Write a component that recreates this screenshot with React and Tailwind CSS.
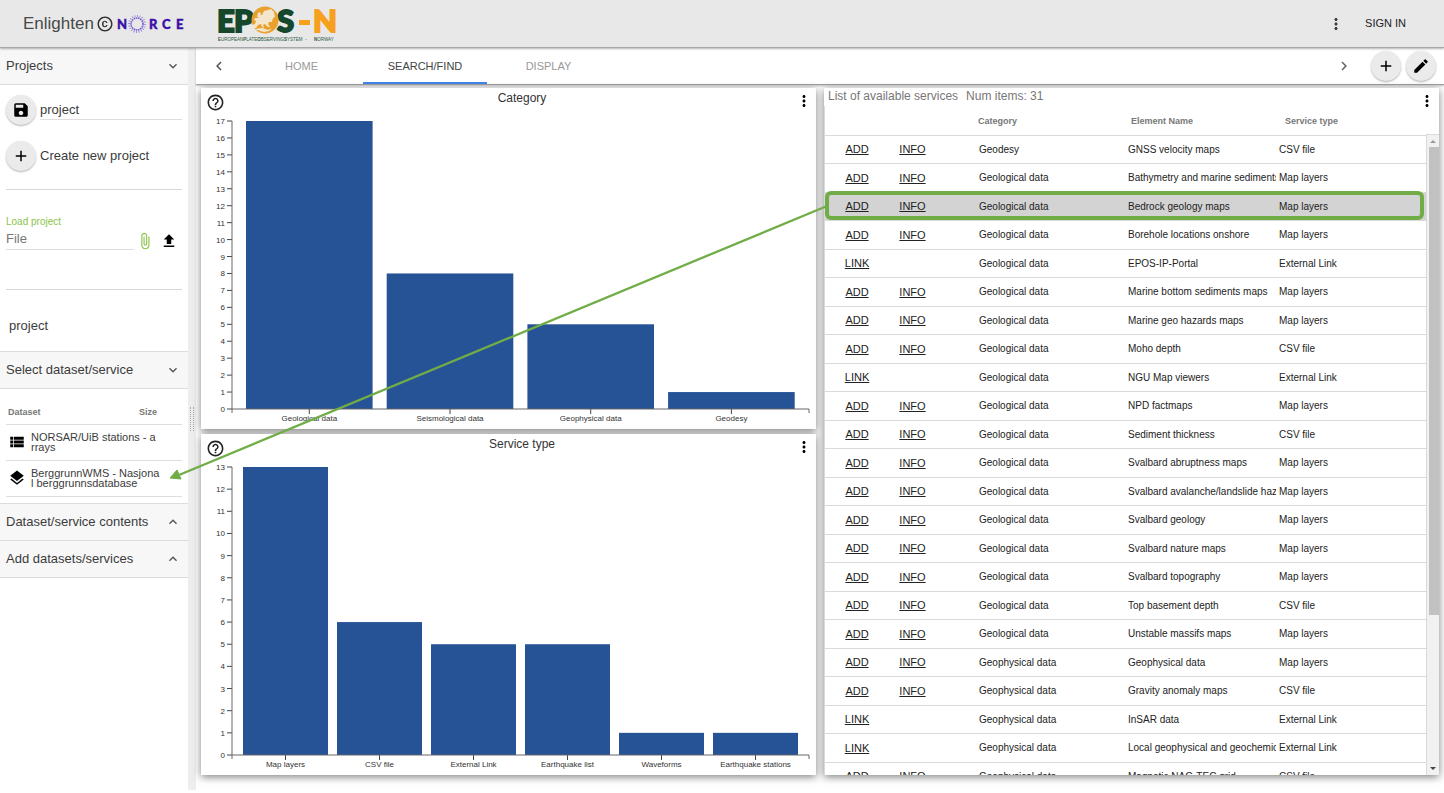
import {
    MdAdd,
    MdAttachFile,
    MdChevronLeft,
    MdChevronRight,
    MdCopyright,
    MdEdit,
    MdExpandLess,
    MdExpandMore,
    MdFileUpload,
    MdHelpOutline,
    MdLayers,
    MdMoreVert,
    MdSave,
    MdViewList,
} from "react-icons/md"

const TABS = ["HOME", "SEARCH/FIND", "DISPLAY"]

const CATEGORIES = [
    { label: "Geological data", value: 17 },
    { label: "Seismological data", value: 8 },
    { label: "Geophysical data", value: 5 },
    { label: "Geodesy", value: 1 },
]

const SERVICE_TYPES = [
    { label: "Map layers", value: 13 },
    { label: "CSV file", value: 6 },
    { label: "External Link", value: 5 },
    { label: "Earthquake list", value: 5 },
    { label: "Waveforms", value: 1 },
    { label: "Earthquake stations", value: 1 },
]

const DATASETS = [
    { name: "NORSAR/UiB stations - a\nrrays", Icon: MdViewList },
    { name: "BerggrunnWMS - Nasjona\nl berggrunnsdatabase", Icon: MdLayers },
]

const SERVICES = [
    ["Geodesy", "GNSS velocity maps", "CSV file"],
    ["Geological data", "Bathymetry and marine sediments", "Map layers"],
    ["Geological data", "Bedrock geology maps", "Map layers"],
    ["Geological data", "Borehole locations onshore", "Map layers"],
    ["Geological data", "EPOS-IP-Portal", "External Link"],
    ["Geological data", "Marine bottom sediments maps", "Map layers"],
    ["Geological data", "Marine geo hazards maps", "Map layers"],
    ["Geological data", "Moho depth", "CSV file"],
    ["Geological data", "NGU Map viewers", "External Link"],
    ["Geological data", "NPD factmaps", "Map layers"],
    ["Geological data", "Sediment thickness", "CSV file"],
    ["Geological data", "Svalbard abruptness maps", "Map layers"],
    ["Geological data", "Svalbard avalanche/landslide haz", "Map layers"],
    ["Geological data", "Svalbard geology", "Map layers"],
    ["Geological data", "Svalbard nature maps", "Map layers"],
    ["Geological data", "Svalbard topography", "Map layers"],
    ["Geological data", "Top basement depth", "CSV file"],
    ["Geological data", "Unstable massifs maps", "Map layers"],
    ["Geophysical data", "Geophysical data", "Map layers"],
    ["Geophysical data", "Gravity anomaly maps", "CSV file"],
    ["Geophysical data", "InSAR data", "External Link"],
    ["Geophysical data", "Local geophysical and geochemic", "External Link"],
    ["Geophysical data", "Magnetic NAG-TEC grid", "CSV file"],
]

const SELECTED = "Bedrock geology maps"

const NorceLogo = () => (
    <svg width="70" height="22" viewBox="0 0 70 22" role="img" aria-label="NORCE" className="ml-0.5">
        <g fill="#3a10a8" stroke="#3a10a8" strokeWidth="0.4" fontFamily="Lato, sans-serif" fontWeight="900" fontSize="13">
            <text x="1" y="16">N</text>
            <text x="33" y="16">R</text>
            <text x="46" y="16">C</text>
            <text x="60" y="16">E</text>
        </g>
        <g fill="none">
            <circle cx="21" cy="11" r="6" strokeWidth="1.6" strokeDasharray="1.6 0.6" stroke="#7a5fd0" />
            <circle cx="21" cy="11" r="8" strokeWidth="2" strokeDasharray="0.9 1.6" stroke="#9a86da" />
        </g>
    </svg>
)

const EposLogo = () => (
    <svg width="124" height="44" viewBox="0 -3 124 44" role="img" aria-label="EPOS-N">
        <g
            fontFamily="Lato, sans-serif"
            fontWeight="900"
            fontSize="31"
            fill="#14472b"
            stroke="#14472b"
            strokeWidth="1.8"
        >
            <text x="0" y="27">E</text>
            <text x="17" y="27">P</text>
            <text x="60" y="27">S</text>
            <text x="96" y="27" fill="#f6a01d" stroke="#f6a01d">N</text>
        </g>
        <rect x="82" y="15" width="11" height="5" fill="#f6a01d" />
        <circle cx="48" cy="15" r="13.5" fill="#e9a02c" />
        {/* europe */}
        <path
            d="M51 5l3-1 3 3 1 5-2 1-1 4-3 0-1 2 2 3-2 0-3-3-2 1 1 3-2-1-1-3-3 1-2 3-3 0-1-3 3-1 1-3-2-1 1-2 3 0 2-3 2 0 2-4z"
            fill="#f3e6cc"
        />
        <path d="M41 8l2-1 1 2-2 3-2 0zM37 24l8-1 6 2 4-2-3 3-5 1z" fill="#f3e6cc" />
        <g fontFamily="'Liberation Sans', sans-serif" fontSize="4.5" fill="#2c5a40">
            <text x="1" y="36">
                <tspan fontWeight="700">E</tspan>UROPEAN<tspan fontWeight="700">P</tspan>LATE<tspan fontWeight="700">O</tspan>BSERVING<tspan fontWeight="700">S</tspan>YSTEM
            </text>
            <text x="88" y="36">-</text>
            <text x="97" y="36"><tspan fontWeight="700">N</tspan>ORWAY</text>
        </g>
    </svg>
)

const RoundButton = ({ label, children }) => (
    <button
        type="button"
        aria-label={label}
        className="flex size-[30px] shrink-0 items-center justify-center rounded-full bg-[#ebebeb] text-black shadow-[0_1px_2px_rgba(0,0,0,0.3)]"
    >
        {children}
    </button>
)

const Header = () => (
    <header className="relative z-10 flex h-12 shrink-0 items-center border-b border-[#a8a8a8] bg-[#e8e8e8] pr-[38px] shadow-[0_1px_2px_rgba(0,0,0,0.3)]">
        <div className="flex w-[217px] items-center pl-[23px]">
            <span className="text-[17px] text-[#484848]">Enlighten</span>
            <MdCopyright className="ml-0.5 size-[18px] text-[#333]" />
            <NorceLogo />
        </div>
        <EposLogo />
        <div className="ml-auto flex items-center gap-5">
            <button type="button" aria-label="More">
                <MdMoreVert className="size-[18px] text-[#333]" />
            </button>
            <a href="#signin" className="text-[11px] text-[#222]">SIGN IN</a>
        </div>
    </header>
)

const SectionHeader = ({ title, open }) => (
    <button
        type="button"
        aria-expanded={open}
        className="flex h-[37px] w-full shrink-0 items-center justify-between border-b border-[#dcdcdc] bg-[#f7f7f7] pr-[7px] pl-1.5 text-left text-[13px]"
    >
        {title}
        {open ? <MdExpandMore className="size-4 text-[#555]" /> : <MdExpandLess className="size-4 text-[#555]" />}
    </button>
)

const Sidebar = () => (
    <aside className="flex w-[188px] shrink-0 flex-col overflow-hidden text-[#3c3c3c]">
        <SectionHeader title="Projects" open />
        <div className="flex flex-col border-b border-[#dcdcdc] px-1.5 pt-2.5">
            <div className="flex items-center gap-1">
                <RoundButton label="Save project">
                    <MdSave className="size-[18px]" />
                </RoundButton>
                <input
                    aria-label="Project name"
                    defaultValue="project"
                    className="h-5 w-full min-w-0 border-b border-[#dedede] text-[13px] outline-none"
                />
            </div>
            <div className="mt-4 flex items-center gap-1">
                <RoundButton label="Create new project">
                    <MdAdd className="size-[18px]" />
                </RoundButton>
                <span className="text-[13px]">Create new project</span>
            </div>
            <hr className="mt-[18px] border-[#d8d8d8]" />

            <label htmlFor="project-file" className="mt-[26px] text-[10px] leading-3 text-[#8bc34a]">
                Load project
            </label>
            <div className="flex h-[22px] items-end">
                <input
                    id="project-file"
                    placeholder="File"
                    className="h-[22px] w-32 border-b border-[#dedede] text-[13px] outline-none placeholder:text-[#777]"
                />
                <button type="button" aria-label="Attach file" className="ml-0.5">
                    <MdAttachFile className="size-[18px] text-[#8bc34a]" />
                </button>
                <button type="button" aria-label="Upload" className="ml-1.5">
                    <MdFileUpload className="size-[18px] text-black" />
                </button>
            </div>
            <hr className="mt-[39px] border-[#d8d8d8]" />
            <p className="mt-[26px] mb-[15px] pl-[3px] text-[13px] leading-5">project</p>
        </div>

        <SectionHeader title="Select dataset/service" open />
        <div className="border-b border-[#dcdcdc] px-1.5 pt-[13px] pb-1.5">
            <table className="w-full table-fixed border-collapse text-left">
                <thead>
                    <tr className="h-[22px] border-b border-[#dedede] text-[9px] text-[#777]">
                        <th className="w-[133px] pl-0.5">Dataset</th>
                        <th>Size</th>
                    </tr>
                </thead>
                <tbody>
                    {DATASETS.map(({ name, Icon }) => (
                        <tr key={name} className="h-9 border-b border-[#dedede]">
                            <td colSpan={2}>
                                <div className="flex items-center gap-[5px] pl-0.5">
                                    <Icon className="size-[18px] shrink-0 text-black" />
                                    <span className="text-[11px] leading-[10px] whitespace-pre-line">{name}</span>
                                </div>
                            </td>
                        </tr>
                    ))}
                </tbody>
            </table>
        </div>
        <SectionHeader title="Dataset/service contents" />
        <SectionHeader title="Add datasets/services" />
    </aside>
)

const Splitter = () => (
    <div className="flex w-2 shrink-0 items-center justify-center bg-[#eeeeee]">
        <div className="h-6 w-1 border-x border-dotted border-[#aaa]" />
    </div>
)

const TabBar = () => (
    <nav className="flex h-[37px] shrink-0 items-center border-b border-[#a0a0a0] bg-white pr-2 pl-3.5 shadow-[0_1px_2px_rgba(0,0,0,0.25)]">
        <button type="button" aria-label="Previous tabs" className="w-[30px]">
            <MdChevronLeft className="size-[18px] text-[#555]" />
        </button>
        {TABS.map((tab) => (
            <button
                type="button"
                key={tab}
                className={
                    tab === "SEARCH/FIND"
                        ? "h-full w-[124px] border-b-2 border-[#4285e8] pt-0.5 text-[11px] text-[#444]"
                        : "h-full w-[123px] text-[11px] text-[#999]"
                }
            >
                {tab}
            </button>
        ))}
        <button type="button" aria-label="Next tabs" className="mr-[18px] ml-auto">
            <MdChevronRight className="size-[18px] text-[#666]" />
        </button>
        <div className="flex gap-[5px]">
            <RoundButton label="Add">
                <MdAdd className="size-[18px]" />
            </RoundButton>
            <RoundButton label="Edit">
                <MdEdit className="size-[18px]" />
            </RoundButton>
        </div>
    </nav>
)

const BarChart = ({ data, step, offset, barWidth }) => {
    const left = 31
    const top = 9
    const bottom = 297
    const max = data[0].value
    const y = (v) => bottom - (v * (bottom - top)) / max
    const ticks = Array.from({ length: max + 1 }, (_, i) => i)

    return (
        <svg viewBox="0 0 615 317" className="min-h-0 w-full flex-1" fontSize="8" fill="#333">
            {data.map((d, i) => {
                const x = left + offset + i * step
                const mid = x + barWidth / 2
                return (
                    <g key={d.label}>
                        <rect x={x} y={y(d.value)} width={barWidth} height={bottom - y(d.value)} fill="#265296" />
                        <path d={`M${mid} ${bottom}v5`} stroke="#444" />
                        <text x={mid} y={bottom + 12} textAnchor="middle">{d.label}</text>
                    </g>
                )
            })}
            {ticks.map((t) => (
                <g key={t}>
                    <path d={`M${left - 5} ${y(t)}h5`} stroke="#444" />
                    <text x={left - 7} y={y(t) + 3} textAnchor="end">{t}</text>
                </g>
            ))}
            <path d={`M${left} ${top}V${bottom + 4}M${left} ${bottom}H608v4`} fill="none" stroke="#666" />
        </svg>
    )
}

const ChartPanel = ({ title, ...chart }) => (
    <section className="flex min-h-0 flex-1 flex-col bg-white shadow-[0_2px_8px_rgba(0,0,0,0.5)]">
        <div className="flex h-6 shrink-0 items-start justify-between pr-[3px] pl-[5px]">
            <button type="button" aria-label="Help" className="mt-[5px]">
                <MdHelpOutline className="size-[19px] text-[#222]" />
            </button>
            <h2 className="pl-6 text-xs leading-5 text-[#333]">{title}</h2>
            <button type="button" aria-label="Chart menu" className="mt-1">
                <MdMoreVert className="size-[18px] text-black" />
            </button>
        </div>
        <BarChart {...chart} />
    </section>
)

const ServiceRow = ({ category, name, type }) => {
    const selected = name === SELECTED
    const external = type === "External Link"

    return (
        <tr
            className={
                selected
                    ? "relative border-b border-[#dadada] bg-[#d3d3d3] odd:h-7 even:h-[29px]"
                    : "border-b border-[#dadada] odd:h-7 even:h-[29px]"
            }
        >
            <td className="text-center text-[11px]">
                <a href="#add" className="underline">{external ? "LINK" : "ADD"}</a>
                {selected && (
                    <span className="pointer-events-none absolute -inset-y-px right-0.5 left-0 rounded-md border-4 border-[#70ad47]" />
                )}
            </td>
            <td className="text-center text-[11px]">
                {!external && <a href="#info" className="underline">INFO</a>}
            </td>
            <td className="pt-px pl-[43px]">{category}</td>
            <td className="overflow-hidden pt-px pl-0.5 whitespace-nowrap">{name}</td>
            <td className="pt-px pl-[3px]">{type}</td>
        </tr>
    )
}

const ScrollBar = () => (
    <div className="mt-7 flex w-[13px] shrink-0 flex-col items-center border-t border-l border-[#dadada] bg-[#f1f1f1]">
        <svg viewBox="0 0 12 12" className="size-3 shrink-0">
            <path d="M3 8l3-3 3 3z" fill="#999" />
        </svg>
        <div className="min-h-0 w-full flex-1 pl-0.5">
            <div className="h-[76%] bg-[#c1c1c1]" />
        </div>
        <svg viewBox="0 0 12 12" className="size-3 shrink-0">
            <path d="M3 4l3 3 3-3z" fill="#444" />
        </svg>
    </div>
)

const ServiceList = () => (
    <section className="flex min-h-0 min-w-0 flex-col bg-white shadow-[0_2px_8px_rgba(0,0,0,0.5)]">
        <div className="flex h-[18px] shrink-0 items-start justify-between pl-1">
            <h2 className="flex gap-2 text-xs leading-4 text-[#777]">
                <span>List of available services</span>
                <span>Num items: 31</span>
            </h2>
            <button type="button" aria-label="List menu" className="mt-1 mr-[3px]">
                <MdMoreVert className="size-[18px] text-black" />
            </button>
        </div>
        <div className="flex min-h-0 flex-1">
            <div className="min-w-0 flex-1 overflow-y-auto border-l border-[#dadada] [scrollbar-width:none]">
                <table className="w-full table-fixed border-collapse text-left text-[10px] leading-4 text-[#222]">
                    <thead>
                        <tr className="h-[29px] border-b border-[#dadada] text-[9px] text-[#777]">
                            <th className="w-16" />
                            <th className="w-[47px]" />
                            <th className="w-[190px] pt-0.5 pl-[42px]">Category</th>
                            <th className="w-[150px] pt-0.5 pl-[5px]">Element Name</th>
                            <th className="pt-0.5 pl-[9px]">Service type</th>
                        </tr>
                    </thead>
                    <tbody>
                        {SERVICES.map(([category, name, type]) => (
                            <ServiceRow key={name} category={category} name={name} type={type} />
                        ))}
                    </tbody>
                </table>
            </div>
            <ScrollBar />
        </div>
    </section>
)

// points from the selected service to the dataset it was added as
const LinkArrow = () => (
    <svg viewBox="0 0 1444 793" className="pointer-events-none absolute inset-0 z-20 size-full">
        <path d="M827 206L179 475" stroke="#70ad47" strokeWidth="2.3" />
        <path d="M170 478l7-8 4 9z" fill="#70ad47" stroke="#70ad47" />
    </svg>
)

const App = () => {
    return (
        <div className="relative flex h-screen flex-col overflow-hidden bg-white font-['Liberation_Sans',Arial,sans-serif]">
            <Header />
            <div className="flex min-h-0 flex-1 pb-[3px]">
                <Sidebar />
                <Splitter />
                <main className="flex min-w-0 flex-1 flex-col">
                    <TabBar />
                    <div className="grid min-h-0 flex-1 grid-cols-2 grid-rows-1 gap-2 px-[5px] pt-[3px] pb-[15px]">
                        <div className="flex min-h-0 flex-col gap-[5px]">
                            <ChartPanel title="Category" data={CATEGORIES} step={140.7} offset={14} barWidth={126.6} />
                            <ChartPanel title="Service type" data={SERVICE_TYPES} step={94} offset={11} barWidth={85} />
                        </div>
                        <ServiceList />
                    </div>
                </main>
            </div>
            <LinkArrow />
        </div>
    )
}

export default App
